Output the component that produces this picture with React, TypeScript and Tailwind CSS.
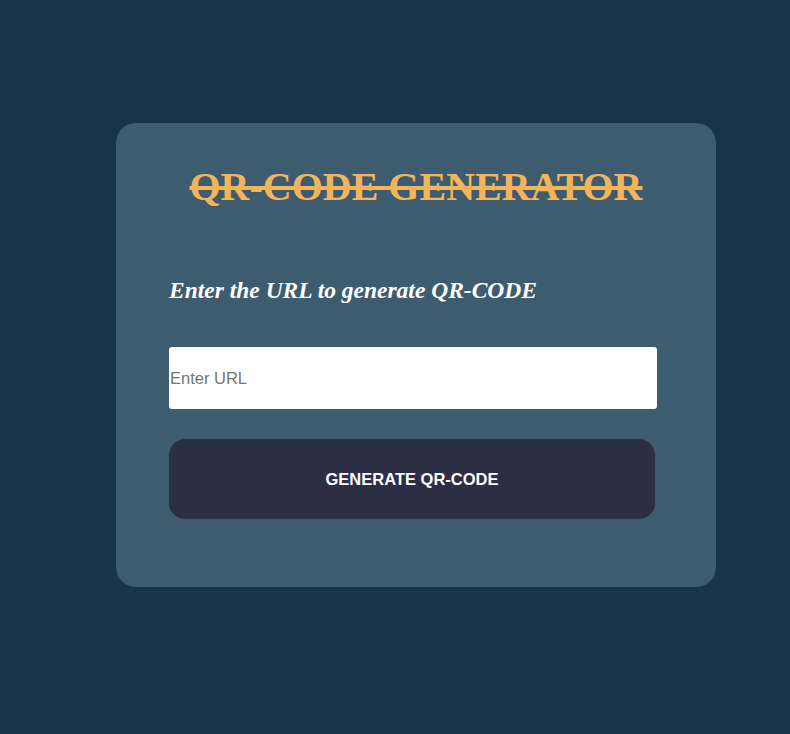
export default function App() {
    return (
        <div className="min-h-[734px] w-full bg-[#17344a] pt-[123px] pl-[116px]">
            <div className="flex w-[600px] flex-col rounded-[20px] bg-[#3d5c70] pt-[41px] pb-[68px] px-[53px]">
                <h1 className="text-center font-['Liberation_Serif',serif] text-[40px] leading-[46px] font-bold text-[#f4b55a] line-through">
                    QR-CODE GENERATOR
                </h1>
                <p className="mt-[67px] font-['Liberation_Serif',serif] text-[23.5px] leading-[27px] font-bold italic text-white">
                    Enter the URL to generate QR-CODE
                </p>
                <input
                    type="text"
                    placeholder="Enter URL"
                    className="mt-[43px] h-[62px] w-[488px] rounded-[3px] bg-white px-px font-['Liberation_Sans',sans-serif] text-[16.5px] text-black outline-none placeholder:text-[#757575]"
                />
                <button className="mt-[30px] h-[80px] w-[486px] rounded-[16px] bg-[#2c2e43] font-['Liberation_Sans',sans-serif] text-[16.5px] font-bold text-white">
                    GENERATE QR-CODE
                </button>
            </div>
        </div>
    );
}
